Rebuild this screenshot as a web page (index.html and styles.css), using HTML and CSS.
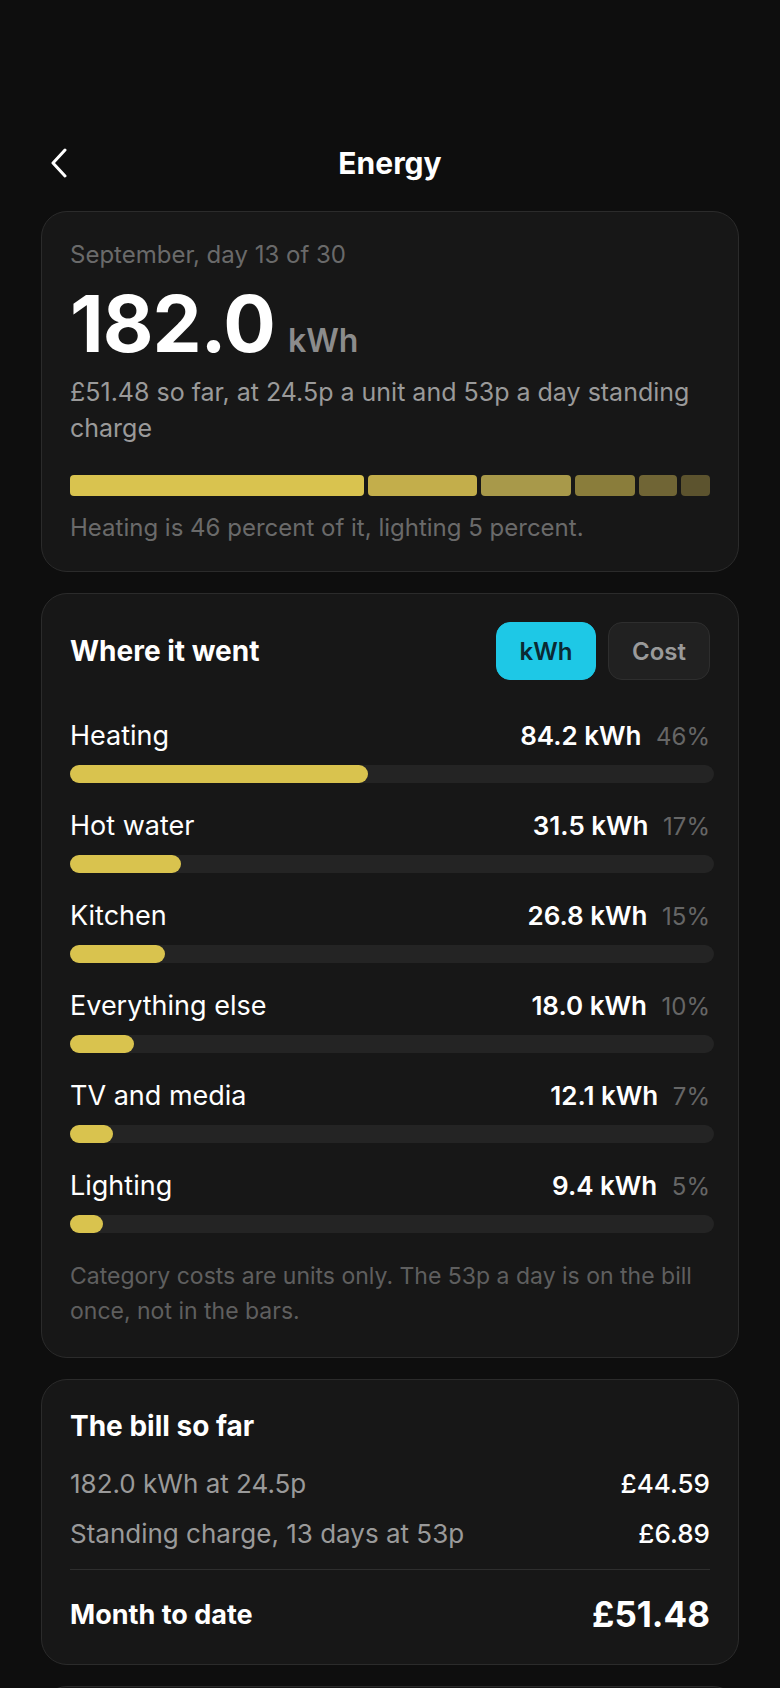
FILE: index.html
```html
<!DOCTYPE html>
<html lang="en">
<head>
    <meta charset="UTF-8">
    <meta name="viewport" content="width=device-width, initial-scale=1.0">
    <title>Energy</title>
    <link rel="stylesheet" href="styles.css">
</head>
<body>
    <div class="page">
        <header class="top-bar">
            <button class="back" aria-label="Back">
                <svg width="18" height="30" viewBox="0 0 18 30" fill="none">
                    <path d="M15 2 L3 15 L15 28" stroke="#fff" stroke-width="3" stroke-linecap="round" stroke-linejoin="round"/>
                </svg>
            </button>
            <h1>Energy</h1>
        </header>

        <section class="card summary">
            <div class="date">September, day 13 of 30</div>
            <div class="total">
                <span class="total-num">182.0</span>
                <span class="total-unit">kWh</span>
            </div>
            <p class="desc">£51.48 so far, at 24.5p a unit and 53p a day standing charge</p>
            <div class="stack">
                <div class="seg seg-1" style="flex-grow: 294"></div>
                <div class="seg seg-2" style="flex-grow: 108"></div>
                <div class="seg seg-3" style="flex-grow: 90"></div>
                <div class="seg seg-4" style="flex-grow: 60"></div>
                <div class="seg seg-5" style="flex-grow: 38"></div>
                <div class="seg seg-6" style="flex-grow: 29"></div>
            </div>
            <p class="caption">Heating is 46 percent of it, lighting 5 percent.</p>
        </section>

        <section class="card breakdown">
            <div class="card-head">
                <h2>Where it went</h2>
                <div class="toggle">
                    <button class="pill active">kWh</button>
                    <button class="pill">Cost</button>
                </div>
            </div>
            <div class="rows">
                <div class="row">
                    <div class="row-top">
                        <span class="row-name">Heating</span>
                        <span class="row-val">84.2 kWh <span class="pct">46%</span></span>
                    </div>
                    <div class="track"><div class="fill" style="width: 46.3%"></div></div>
                </div>
                <div class="row">
                    <div class="row-top">
                        <span class="row-name">Hot water</span>
                        <span class="row-val">31.5 kWh <span class="pct">17%</span></span>
                    </div>
                    <div class="track"><div class="fill" style="width: 17.3%"></div></div>
                </div>
                <div class="row">
                    <div class="row-top">
                        <span class="row-name">Kitchen</span>
                        <span class="row-val">26.8 kWh <span class="pct">15%</span></span>
                    </div>
                    <div class="track"><div class="fill" style="width: 14.7%"></div></div>
                </div>
                <div class="row">
                    <div class="row-top">
                        <span class="row-name">Everything else</span>
                        <span class="row-val">18.0 kWh <span class="pct">10%</span></span>
                    </div>
                    <div class="track"><div class="fill" style="width: 9.9%"></div></div>
                </div>
                <div class="row">
                    <div class="row-top">
                        <span class="row-name">TV and media</span>
                        <span class="row-val">12.1 kWh <span class="pct">7%</span></span>
                    </div>
                    <div class="track"><div class="fill" style="width: 6.6%"></div></div>
                </div>
                <div class="row">
                    <div class="row-top">
                        <span class="row-name">Lighting</span>
                        <span class="row-val">9.4 kWh <span class="pct">5%</span></span>
                    </div>
                    <div class="track"><div class="fill" style="width: 5.2%"></div></div>
                </div>
            </div>
            <p class="note">Category costs are units only. The 53p a day is on the bill once, not in the bars.</p>
        </section>

        <section class="card bill">
            <h2>The bill so far</h2>
            <div class="bill-line">
                <span>182.0 kWh at 24.5p</span>
                <span class="amount">£44.59</span>
            </div>
            <div class="bill-line">
                <span>Standing charge, 13 days at 53p</span>
                <span class="amount">£6.89</span>
            </div>
            <div class="bill-total">
                <span>Month to date</span>
                <span class="grand">£51.48</span>
            </div>
        </section>

        <section class="card next"></section>
    </div>
</body>
</html>
```

FILE: styles.css
```css
:root {
    --bg: #0e0e0e;
    --card-bg: #171717;
    --card-border: #2b2b2b;
    --text: #ffffff;
    --muted: #9a9a9a;
    --dim: #6a6a6a;
    --track: #242424;
    --yellow: #d9c34e;
    --cyan: #1ec8e6;
}
* {
    box-sizing: border-box;
}
body {
    margin: 0;
    background: var(--bg);
    color: var(--text);
    font-family: Inter, "Noto Sans", sans-serif;
}
.page {
    display: flex;
    flex-direction: column;
    gap: 21px;
    padding: 120px 41px 0;
    height: 1688px;
    overflow: hidden;
}
.top-bar {
    position: relative;
    flex-shrink: 0;
    height: 86px;
    margin-bottom: -16px;
    display: flex;
    align-items: center;
    justify-content: center;
}
.top-bar h1 {
    margin: 0;
    font-size: 30px;
    font-weight: 700;
}
.back {
    position: absolute;
    left: 9px;
    top: 28px;
    background: none;
    border: 0;
    padding: 0;
    display: flex;
}
.card {
    background: var(--card-bg);
    border: 1px solid var(--card-border);
    border-radius: 26px;
    padding: 28px;
    flex-shrink: 0;
}
.date {
    font-size: 24px;
    line-height: 30px;
    color: var(--dim);
}
.total {
    margin-top: 15px;
    display: flex;
    align-items: baseline;
    gap: 13px;
    height: 78px;
}
.total-num {
    font-size: 78px;
    line-height: 78px;
    font-weight: 700;
    letter-spacing: -1px;
}
.total-unit {
    font-size: 32px;
    line-height: 32px;
    font-weight: 600;
    color: #8c8c8c;
}
.desc {
    margin: 11px 0 0;
    font-size: 25px;
    line-height: 36px;
    color: var(--muted);
}
.stack {
    margin-top: 29px;
    display: flex;
    gap: 4px;
    height: 21px;
}
.seg {
    flex-basis: 0;
    border-radius: 4px;
}
.seg-1 { background: #d9c34f; }
.seg-2 { background: #c3ae4b; }
.seg-3 { background: #a8994a; }
.seg-4 { background: #8a7d3b; }
.seg-5 { background: #706535; }
.seg-6 { background: #5c532e; }
.caption {
    margin: 17px 0 0;
    font-size: 24px;
    line-height: 30px;
    color: var(--dim);
}
.card-head {
    display: flex;
    align-items: center;
    justify-content: space-between;
}
.card h2 {
    margin: 0;
    font-size: 28px;
    line-height: 36px;
    font-weight: 700;
}
.toggle {
    display: flex;
    gap: 12px;
}
.pill {
    height: 58px;
    min-width: 102px;
    padding: 0 20px;
    border-radius: 14px;
    font-family: inherit;
    font-size: 24px;
    font-weight: 600;
    border: 1px solid #2e2e2e;
    background: #212121;
    color: #9a9a9a;
}
.pill.active {
    background: var(--cyan);
    border-color: var(--cyan);
    color: #0b2a33;
    min-width: 100px;
}
.rows {
    margin-top: 37px;
    display: flex;
    flex-direction: column;
    gap: 24px;
}
.row-top {
    display: flex;
    justify-content: space-between;
    align-items: center;
    height: 36px;
}
.row-name {
    font-size: 27px;
}
.row-val {
    font-size: 26px;
    font-weight: 600;
}
.pct {
    margin-left: 8px;
    font-size: 24px;
    font-weight: 400;
    color: #666;
}
.track {
    margin-top: 12px;
    margin-right: -4px;
    height: 18px;
    border-radius: 9px;
    background: var(--track);
}
.fill {
    height: 100%;
    border-radius: 9px;
    background: var(--yellow);
}
.note {
    margin: 26px 0 0;
    font-size: 23px;
    line-height: 35px;
    color: #5f5f5f;
}
.bill-line {
    display: flex;
    justify-content: space-between;
    align-items: center;
    height: 36px;
    font-size: 26px;
    color: var(--muted);
    margin-top: 14px;
}
.bill h2 + .bill-line {
    margin-top: 21px;
}
.amount {
    color: var(--text);
    font-weight: 500;
}
.bill-total {
    margin-top: 18px;
    border-top: 1px solid #2e2e2e;
    padding-top: 22px;
    display: flex;
    justify-content: space-between;
    align-items: center;
    box-sizing: content-box;
    height: 44px;
    font-size: 27px;
    font-weight: 700;
}
.grand {
    font-size: 35px;
    font-weight: 700;
}
.next {
    height: 200px;
}
```
